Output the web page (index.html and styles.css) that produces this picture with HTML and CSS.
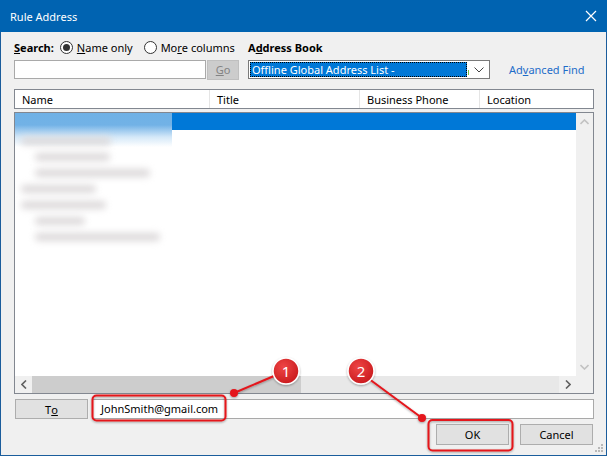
FILE: index.html
```html
<!DOCTYPE html>
<html>
<head>
<meta charset="utf-8">
<link rel="stylesheet" href="styles.css">
</head>
<body>
<div class="window">
  <div class="titlebar">
    <span class="title">Rule Address</span>
    <svg class="close" width="12" height="12" viewBox="0 0 12 12"><path d="M1 1L11 11M11 1L1 11" stroke="#fff" stroke-width="1.2" fill="none"/></svg>
  </div>
  <div class="body">
    <div class="top">
      <div class="col-left">
        <div class="row1">
          <span class="bold"><u>S</u>earch:</span>
          <span class="radio"><span class="circle on"></span><u>N</u>ame only</span>
          <span class="radio"><span class="circle"></span>Mo<u>r</u>e columns</span>
        </div>
        <div class="row2">
          <div class="search-input"></div>
          <div class="go-btn"><u>G</u>o</div>
        </div>
      </div>
      <div class="col-right">
        <div class="row1"><span class="bold">A<u>d</u>dress Book</span></div>
        <div class="row2">
          <div class="dropdown">
            <span class="selected-text">Offline Global Address List -</span>
            <span class="mark"></span>
            <svg class="chev" width="10" height="6" viewBox="0 0 10 6"><path d="M0.5 0.5L5 5L9.5 0.5" stroke="#444" stroke-width="1" fill="none"/></svg>
          </div>
          <span class="link">Ad<u>v</u>anced Find</span>
        </div>
      </div>
    </div>

    <div class="header">
      <div class="hcell c-name">Name</div>
      <div class="hcell c-title">Title</div>
      <div class="hcell c-phone">Business Phone</div>
      <div class="hcell c-loc">Location</div>
    </div>

    <div class="list">
      <div class="list-main">
        <div class="rows">
          <div class="row selected"></div>
          <div class="blur-block">
            <div class="bl w1"></div>
            <div class="bl w2 in"></div>
            <div class="bl w3 in"></div>
            <div class="bl w4"></div>
            <div class="bl w5"></div>
            <div class="bl w6 in"></div>
            <div class="bl w7 in"></div>
          </div>
        </div>
        <div class="vscroll">
          <svg width="9" height="6" viewBox="0 0 9 6"><path d="M0.5 5L4.5 1L8.5 5" stroke="#c2c2c2" stroke-width="1.6" fill="none"/></svg>
          <svg width="9" height="6" viewBox="0 0 9 6"><path d="M0.5 1L4.5 5L8.5 1" stroke="#c2c2c2" stroke-width="1.6" fill="none"/></svg>
        </div>
      </div>
      <div class="list-bottom">
        <div class="hscroll">
          <div class="arrow"><svg width="6" height="9" viewBox="0 0 6 9"><path d="M5 0.5L1 4.5L5 8.5" stroke="#606060" stroke-width="1.6" fill="none"/></svg></div>
          <div class="thumb"></div>
          <div class="track"></div>
          <div class="arrow"><svg width="6" height="9" viewBox="0 0 6 9"><path d="M1 0.5L5 4.5L1 8.5" stroke="#606060" stroke-width="1.6" fill="none"/></svg></div>
        </div>
        <div class="corner"></div>
      </div>
    </div>

    <div class="to-row">
      <div class="btn to-btn">T<u>o</u></div>
      <div class="to-input">JohnSmith@gmail.com</div>
    </div>

    <div class="btn-row">
      <div class="btn ok-btn">OK</div>
      <div class="btn">Cancel</div>
    </div>
  </div>
  <svg class="grip" width="8" height="8" viewBox="0 0 8 8">
    <rect x="6" y="0" width="2" height="2" fill="#b8b8b8"/>
    <rect x="3" y="3" width="2" height="2" fill="#b8b8b8"/>
    <rect x="6" y="3" width="2" height="2" fill="#b8b8b8"/>
    <rect x="0" y="6" width="2" height="2" fill="#b8b8b8"/>
    <rect x="3" y="6" width="2" height="2" fill="#b8b8b8"/>
    <rect x="6" y="6" width="2" height="2" fill="#b8b8b8"/>
  </svg>

  <svg class="annot" width="607" height="456" viewBox="0 0 607 456">
    <defs>
      <radialGradient id="bg" cx="0.4" cy="0.35" r="0.7">
        <stop offset="0" stop-color="#ee4545"/>
        <stop offset="1" stop-color="#c8191c"/>
      </radialGradient>
      <filter id="sh" x="-30%" y="-30%" width="160%" height="160%">
        <feDropShadow dx="0" dy="1" stdDeviation="1.2" flood-color="#000" flood-opacity="0.35"/>
      </filter>
    </defs>
    <g filter="url(#sh)">
      <rect x="92.5" y="395.5" width="133" height="25" rx="4" fill="none" stroke="#e4151b" stroke-width="2"/>
      <rect x="428.5" y="420" width="84" height="30.5" rx="4" fill="none" stroke="#e4151b" stroke-width="2"/>
      <line x1="234" y1="393" x2="274" y2="376" stroke="#e4151b" stroke-width="2"/>
      <circle cx="234" cy="393" r="4" fill="#e4151b"/>
      <line x1="361" y1="373" x2="422" y2="418" stroke="#e4151b" stroke-width="2"/>
      <circle cx="422" cy="418" r="4" fill="#e4151b"/>
      <circle cx="286" cy="371" r="13" fill="url(#bg)" stroke="#fff" stroke-width="1.5"/>
      <circle cx="361" cy="371" r="13" fill="url(#bg)" stroke="#fff" stroke-width="1.5"/>
    </g>
    <text x="286" y="376.5" class="badge-num" text-anchor="middle">1</text>
    <text x="361" y="376.5" class="badge-num" text-anchor="middle">2</text>
  </svg>
</div>
</body>
</html>
```

FILE: styles.css
```css
* { box-sizing: border-box; }
html, body { margin: 0; padding: 0; }
body {
  width: 607px;
  height: 456px;
  overflow: hidden;
  font-family: "Segoe UI", "Noto Sans", "Liberation Sans", sans-serif;
  font-size: 11px;
  color: #000;
}
u { text-decoration: underline; text-underline-offset: 1px; }

.window {
  position: relative;
  width: 607px;
  height: 456px;
  background: #f0f0f0;
  border: 1px solid #1b5d9c;
  border-top: none;
}
.titlebar {
  height: 32px;
  margin: 0 -1px;
  background: #0063b1;
  display: flex;
  align-items: center;
  justify-content: space-between;
  padding: 0 10px 0 10px;
}
.title { color: #fff; font-size: 11px; }
.close { margin-right: 0; }

.body { padding: 8px 12px 0 13px; }

.top { display: flex; gap: 9px; height: 39px; }
.col-left { width: 225px; display: flex; flex-direction: column; gap: 5px; }
.col-right { flex: 1; display: flex; flex-direction: column; gap: 5px; }
.row1 { height: 15px; display: flex; align-items: center; white-space: nowrap; }
.row2 { height: 19px; display: flex; align-items: center; }
.bold { font-weight: bold; }
.radio { display: flex; align-items: center; margin-left: 6px; }
.radio + .radio { margin-left: 11px; }
.circle {
  width: 13px; height: 13px; border-radius: 50%;
  border: 1px solid #333; background: #fff; margin-right: 4px;
  position: relative;
}
.circle.on::after {
  content: ""; position: absolute; left: 2px; top: 2px;
  width: 7px; height: 7px; border-radius: 50%; background: #333;
}

.search-input {
  width: 193px; height: 19px; background: #fff; border: 1px solid #a9a9a9;
}
.go-btn {
  width: 32px; height: 20px; margin-left: 1px;
  background: #cccccc; border: 1px solid #bfbfbf; color: #838383;
  display: flex; align-items: center; justify-content: center;
}

.dropdown {
  width: 242px; height: 19px; background: #fff; border: 1px solid #7a7a7a;
  display: flex; align-items: center; padding: 1px;
  position: relative;
}
.selected-text {
  width: 217px; height: 15px; background: #0078d7; color: #fff;
  outline: 1px dotted #000; outline-offset: -1px;
  display: flex; align-items: center; padding-left: 2px; white-space: nowrap; overflow: hidden;
}
.mark { width: 1px; height: 5px; background: #7ac143; margin-left: 1px; margin-top: 6px; }
.chev { position: absolute; right: 5px; top: 6px; }
.link { color: #1e6cc9; margin-left: 19px; white-space: nowrap; }

.header {
  margin-top: 10px;
  height: 20px;
  background: #fff;
  border: 1px solid #828790;
  display: flex;
  align-items: center;
}
.hcell { height: 18px; display: flex; align-items: center; padding-left: 7px; border-right: 1px solid #e5e5e5; }
.c-name { width: 195px; }
.c-title { width: 150px; }
.c-phone { width: 120px; }
.c-loc { flex: 1; border-right: none; }

.list {
  margin-top: 3px;
  height: 282px;
  background: #fff;
  border: 1px solid #828790;
  display: flex;
  flex-direction: column;
}
.list-main { flex: 1; display: flex; }
.rows { flex: 1; position: relative; }
.row { height: 17px; }
.row.selected { background: #0078d7; }
.blur-block {
  position: absolute; left: 0; top: 0; width: 157px; height: 129px;
  background: linear-gradient(#6fb1e6 0px, #72b2e6 12px, #d4e8f8 24px, #fff 34px);
  padding: 24px 0 0 6px;
}
.bl { height: 8px; margin-bottom: 8px; background: #dcd9da; border-radius: 4px; filter: blur(3.5px); }
.bl.in { margin-left: 14px; }
.w1 { width: 90px; }
.w2 { width: 75px; }
.w3 { width: 115px; }
.w4 { width: 75px; }
.w5 { width: 85px; }
.w6 { width: 50px; }
.w7 { width: 125px; }

.vscroll {
  width: 17px; background: #f0f0f0;
  display: flex; flex-direction: column; justify-content: space-between; align-items: center;
  padding: 6px 0 6px 0;
}
.list-bottom { height: 17px; display: flex; }
.hscroll { flex: 1; display: flex; background: #e8e8e8; }
.hscroll .arrow { width: 17px; display: flex; align-items: center; justify-content: center; background: #f0f0f0; }
.thumb { width: 269px; background: #cdcdcd; }
.track { flex: 1; }
.corner { width: 17px; background: #f0f0f0; }

.to-row { margin-top: 4px; height: 21px; display: flex; align-items: center; gap: 4px; }
.btn {
  width: 73px; height: 21px; background: #e1e1e1; border: 1px solid #adadad;
  display: flex; align-items: center; justify-content: center;
}
.to-btn { margin-left: 1px; height: 20px; margin-top: 1px; }
.to-input {
  flex: 1; height: 20px; background: #fff; border: 1px solid #a9a9a9;
  display: flex; align-items: center; padding-left: 8px;
}

.btn-row { margin-top: 5px; display: flex; justify-content: flex-end; gap: 11px; padding-right: 1px; }
.ok-btn { border-color: #adadad; }

.grip { position: absolute; right: 3px; bottom: 3px; }

.annot { position: absolute; left: -1px; top: 0; pointer-events: none; }
.badge-num { fill: #fff; font-family: "Segoe UI", "Noto Sans", sans-serif; font-size: 15px; }
```
